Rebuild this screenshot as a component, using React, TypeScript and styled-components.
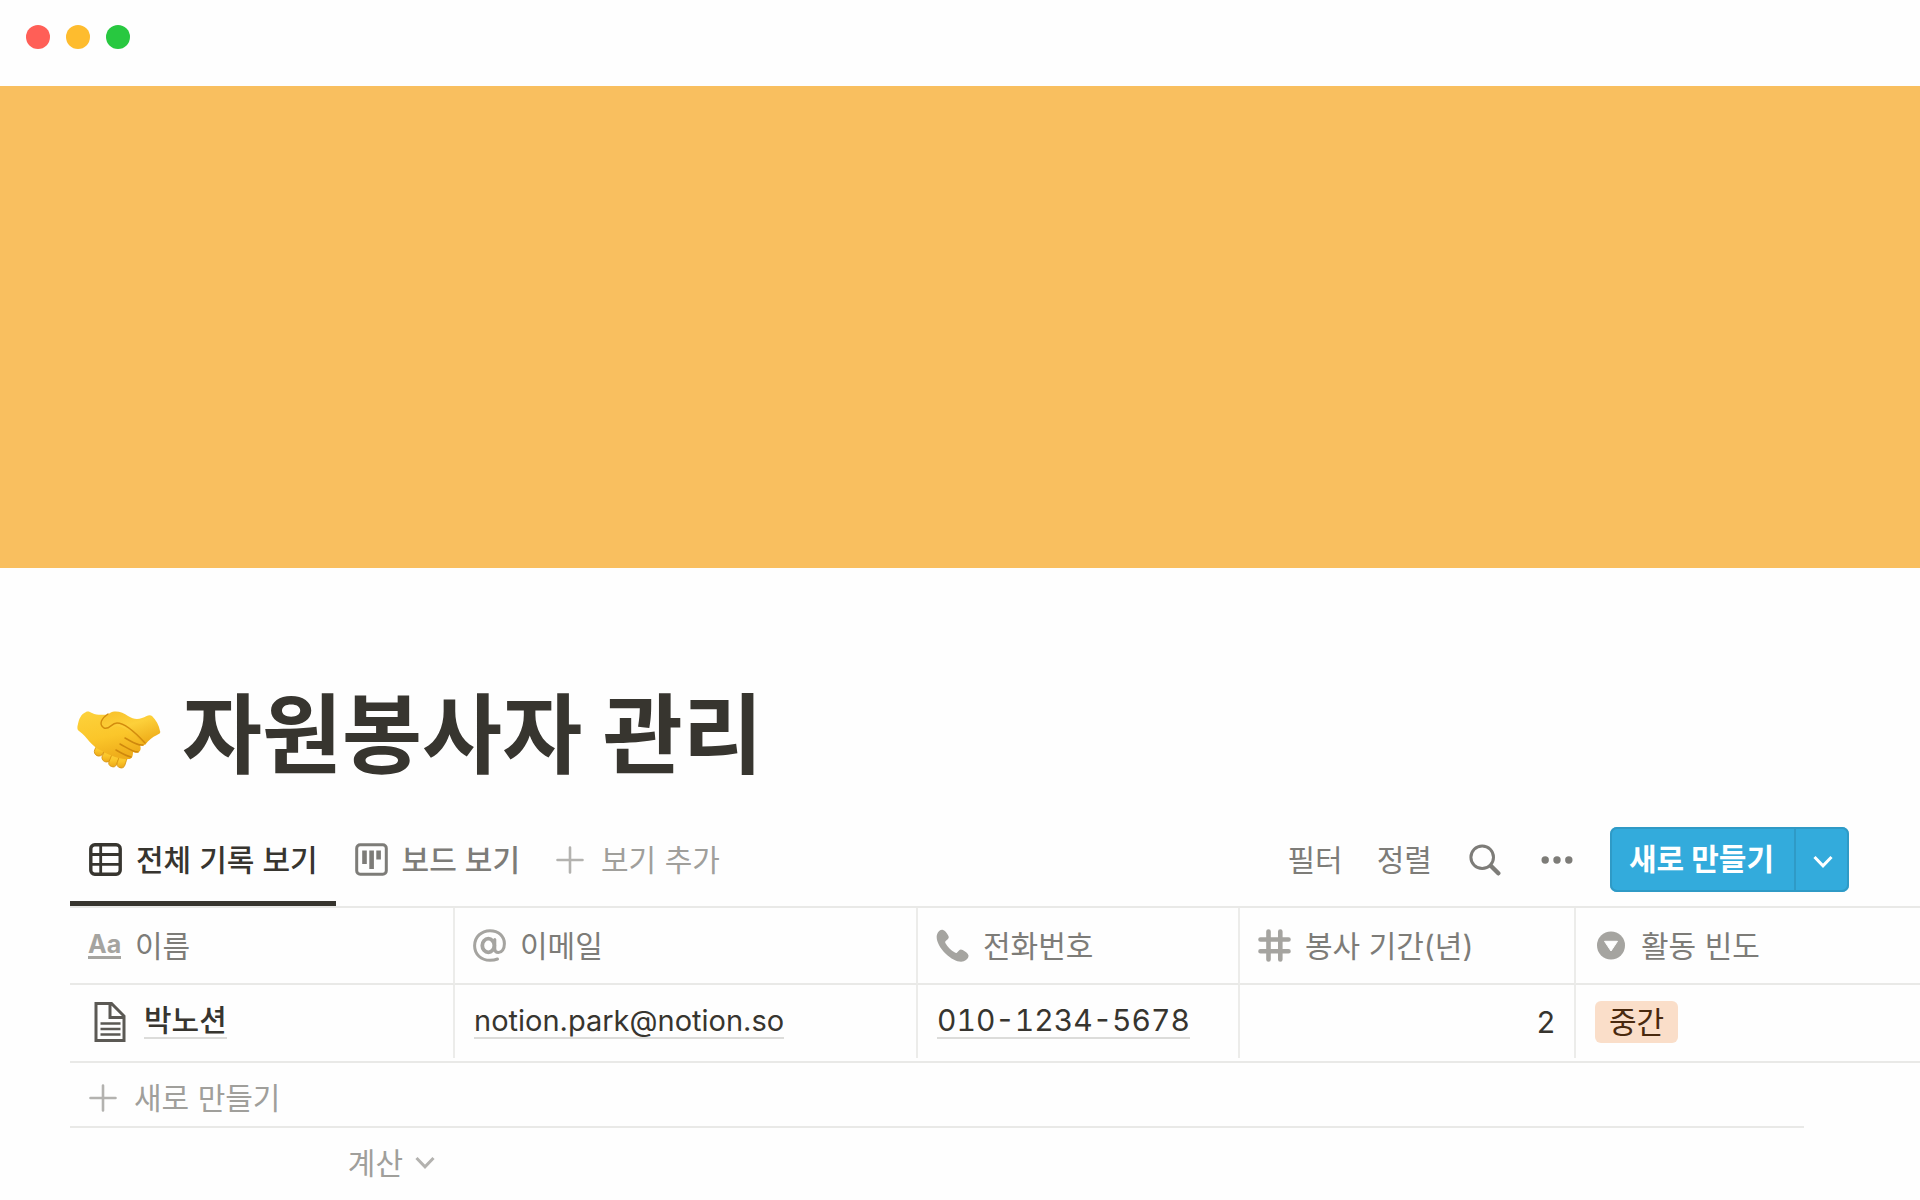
import React from 'react';
import styled, { createGlobalStyle } from 'styled-components';

const GlobalStyle = createGlobalStyle`
  *, *::before, *::after { box-sizing: border-box; }
  body {
    margin: 0;
    background: #fefefe;
    color: #37352f;
    font-family: Inter, "Noto Sans CJK KR", sans-serif;
    font-size: 30px;
    line-height: 40px;
    overflow-x: hidden;
  }
  button { font: inherit; color: inherit; background: none; border: 0; padding: 0; margin: 0; cursor: pointer; white-space: nowrap; }
  a { color: inherit; text-decoration: none; }
  svg { display: block; flex: none; }
`;

const TitleBar = styled.header`
  display: flex;
  gap: 16px;
  height: 86px;
  padding: 25px 26px;
`;

const Dot = styled.span<{ $color: string }>`
  width: 24px;
  height: 24px;
  border-radius: 50%;
  background: ${p => p.$color};
`;

const Cover = styled.div`
  height: 482px;
  background: #f9bf5f;
`;

const Main = styled.main`
  padding: 112px 0 0 70px;
`;

const Heading = styled.h1`
  display: flex;
  align-items: center;
  gap: 21px;
  margin: 0;
  padding-left: 7px;
  font-size: 87px;
  line-height: 112px;
  font-weight: 700;

  svg { margin-top: 8px; }
`;

const Toolbar = styled.div`
  display: flex;
  justify-content: space-between;
  height: 116px;
  padding: 35px 71px 0 0;
  border-bottom: 2px solid #e9e9e7;
`;

const Tabs = styled.div`
  display: flex;
`;

const Tab = styled.button<{ $active?: boolean }>`
  display: flex;
  align-items: center;
  gap: 14px;
  height: 79px;
  padding: 0 18px 9px 19px;
  color: ${p => (p.$active ? '#37352f' : '#7d7c78')};
  font-weight: 500;
  border-bottom: 5px solid ${p => (p.$active ? '#37352f' : 'transparent')};
`;

const AddView = styled(Tab)`
  gap: 16px;
  padding-left: 17px;
  color: #a09f9b;
  font-weight: 400;
`;

const Actions = styled.div`
  display: flex;
  align-items: center;
  gap: 34px;
  height: 65px;
  color: #7d7c78;
`;

const IconButton = styled.button`
  padding: 0 3px;
`;

const NewGroup = styled.div`
  display: flex;
  height: 65px;
  border-radius: 7px;
  overflow: hidden;
  color: #fff;
  background: #33abdc;
  box-shadow: inset 0 0 0 2px #2f9ac6;
`;

const NewButton = styled.button`
  padding: 0 20px 2px 19px;
  font-weight: 700;
`;

const NewMenu = styled.button`
  display: grid;
  place-items: center;
  width: 55px;
  padding-top: 4px;
  border-left: 2px solid #2f9ac6;
`;

const TableFrame = styled.div`
  padding-bottom: 3px;
  border-bottom: 2px solid #e9e9e7;
`;

const Table = styled.table`
  width: 100%;
  table-layout: fixed;
  border-collapse: separate;
  border-spacing: 0;
`;

const Th = styled.th`
  height: 77px;
  padding: 0 18px;
  font-weight: 400;
  text-align: left;
  color: #7d7c78;
  border-bottom: 2px solid #e9e9e7;
  border-right: 2px solid #ececea;
  white-space: nowrap;
  &:last-child { border-right: 0; }
`;

const Td = styled.td<{ $align?: string }>`
  height: 73px;
  padding: 0 19px;
  text-align: ${p => p.$align || 'left'};
  border-right: 2px solid #ececea;
  white-space: nowrap;
  &:last-child { border-right: 0; }
`;

const Label = styled.div`
  display: flex;
  align-items: center;
  gap: 14px;
`;

const PageLabel = styled(Label)`
  gap: 18px;
  padding-left: 5px;
`;

const Value = styled.a<{ $kind?: 'name' | 'email' | 'phone' }>`
  display: block;
  width: fit-content;
  line-height: 33px;
  font-size: ${p => (p.$kind === 'email' ? '29px' : '30px')};
  font-weight: ${p => (p.$kind === 'name' ? 500 : 400)};
  font-variant-numeric: ${p => (p.$kind === 'phone' ? 'tabular-nums' : 'normal')};
  border-bottom: 2px solid #dcdcda;
`;

const Tag = styled.span`
  display: inline-block;
  padding: 0 14px;
  line-height: 42px;
  border-radius: 6px;
  background: #fadec9;
  color: #49290e;
`;

const NewRow = styled.button`
  display: flex;
  align-items: center;
  gap: 16px;
  width: calc(100% - 116px);
  height: 65px;
  padding: 7px 18px 0;
  color: #a09f9b;
  border-bottom: 2px solid #e9e9e7;
`;

const Calc = styled.button`
  display: flex;
  align-items: center;
  justify-content: flex-end;
  gap: 12px;
  width: 384px;
  height: 70px;
  padding-right: 19px;
  color: #a09f9b;
`;

const Plus = () => (
  <svg width="30" height="28" viewBox="0 0 30 28" fill="none" stroke="#b3b2af" strokeWidth="2.6" strokeLinecap="round">
    <path d="M15 1.5v25M2.5 14h25" />
  </svg>
);

const Chevron = ({ color }: { color: string }) => (
  <svg width="20" height="14" viewBox="0 0 20 14" fill="none" stroke={color} strokeWidth="3">
    <path d="M1.5 2 10 10.8 18.500 2" />
  </svg>
);

const GridIcon = () => (
  <svg width="33" height="33" viewBox="0 0 33 33" fill="none" stroke="#37352f">
    <rect x="1.8" y="1.8" width="29.4" height="29.4" rx="4" strokeWidth="3.4" />
    <path d="M2 11.5h29M2 21.3h29M11.7 2v29" strokeWidth="2.8" />
  </svg>
);

const BoardIcon = () => (
  <svg width="33" height="33" viewBox="0 0 33 33" fill="none" stroke="#7d7c78">
    <rect x="1.7" y="1.7" width="29.6" height="29.6" rx="3.5" strokeWidth="3" />
    <path d="M9.5 7.5V21M16.6 7.5V26M23.6 7.5V16.5" strokeWidth="4.6" />
  </svg>
);

const SearchIcon = () => (
  <svg width="32" height="32" viewBox="0 0 32 32" fill="none" stroke="#7d7c78">
    <circle cx="13.2" cy="13.2" r="11.3" strokeWidth="3" />
    <path d="M21.8 21.8 29.3 29.3" strokeWidth="4.4" strokeLinecap="round" />
  </svg>
);

const MoreIcon = () => (
  <svg width="32" height="8" viewBox="0 0 32 8" fill="#7d7c78">
    <circle cx="4.2" cy="4" r="3.7" />
    <circle cx="16" cy="4" r="3.7" />
    <circle cx="27.8" cy="4" r="3.7" />
  </svg>
);

const TextGlyph = styled.span`
  width: 33px;
  height: 26px;
  border-bottom: 3px solid #a5a4a0;
  color: #a5a4a0;
  font: 700 25px/22px Inter, sans-serif;
`;

const AtIcon = () => (
  <svg width="33" height="33" viewBox="0 0 33 33" fill="none" stroke="#a5a4a0" strokeLinecap="round">
    <path d="M24.500 30C22 31 19.500 31.300 17 31.300 8 31.300 1.600 25.300 1.600 16.800 1.600 8 8.300 1.700 17 1.700c8.500 0 14.400 5.600 14.400 13 0 5.300-2.600 8.800-6 8.800-2.400 0-3.600-1.400-3.600-3.500V10.500" strokeWidth="3" />
    <ellipse cx="15.300" cy="16.500" rx="6" ry="6.800" strokeWidth="3.800" />
  </svg>
);

const PhoneIcon = () => (
  <svg width="33" height="33" viewBox="0 0 33 33" fill="#a5a4a0">
    <path d="M1 5.5C2 2.5 4.5.5 6.5.8c2.3.4 4.2 3.2 5.7 5.7 1 1.7.6 2.6-.5 3.7l-2 1.9c-.7.7-.6 1.3-.2 2.1 2.2 4 5.4 7 9.4 9.4.9.5 1.5.5 2.2-.2l1.9-2c1.1-1.1 2.2-1.2 3.7-.4 2.6 1.5 5.5 3.5 5.8 5.6.3 2-1.800 4.500-4.800 5.600-4.600 1.700-11.800-1.600-18-7.500C3.200 18.400-.5 10.600 1 5.500z" />
  </svg>
);

const HashIcon = () => (
  <svg width="33" height="33" viewBox="0 0 33 33" fill="none" stroke="#a5a4a0" strokeWidth="4.6" strokeLinecap="round">
    <path d="M10.5 2.5v28M22.3 2.5v28M2.5 10.5h28M2.5 22.3h28" />
  </svg>
);

const SelectIcon = () => (
  <svg width="33" height="33" viewBox="0 0 33 33">
    <circle cx="17" cy="16.5" r="14" fill="#a5a4a0" />
    <path d="M10.500 12.300h13L17 22z" fill="#fefefe" stroke="#fefefe" strokeLinejoin="round" />
  </svg>
);

const PageIcon = () => (
  <svg width="32" height="40" viewBox="0 0 32 40" fill="none" stroke="#5b5954" strokeWidth="3">
    <path d="M2 1.5h15.5L30 14v24.5H2zM16 1.5V15.5h14" />
    <path d="M6.5 21.5h20M6.5 27h20M6.5 32.5h20" strokeWidth="2.6" />
  </svg>
);

const Handshake = () => (
  <svg width="84" height="58" viewBox="0 0 84 58" role="img" aria-label="악수">
    <defs>
      <linearGradient id="skin" x1="0" y1="0" x2="0.3" y2="1">
        <stop offset="0" stopColor="#fdd23c" />
        <stop offset="0.6" stopColor="#fbc62a" />
        <stop offset="1" stopColor="#efae1b" />
      </linearGradient>
      <linearGradient id="sleeve" x1="0" y1="0" x2="0.6" y2="1">
        <stop offset="0" stopColor="#f8c02a" />
        <stop offset="0.5" stopColor="#fdd03a" />
        <stop offset="1" stopColor="#efae1a" />
      </linearGradient>
    </defs>
    <g fill="url(#skin)" stroke="#d8930e" strokeWidth="0.8">
      <rect x="18" y="34" width="9" height="11" rx="4.5" transform="rotate(24 22 39)" />
      <rect x="26" y="38" width="9" height="13" rx="4.5" transform="rotate(24 30 44)" />
      <rect x="33" y="42" width="8" height="14" rx="4" transform="rotate(22 37 49)" />
      <rect x="41" y="44" width="8" height="13" rx="4" transform="rotate(18 45 50)" />
    </g>
    <path d="M9 1c2-1 4 0 6 1 6 3 12 1 18 2 9 1 22 10 31 19 5 5 6 8 4 10-1 2-3 2-5 1 1 3 1 5-1 7-2 1-4 1-6 0 0 4-1 6-3 7-9 1-19-3-28-8C13 35 11 26 2 20c-2-1-2-4-1-7C2 8 4 3 9 1z" fill="url(#skin)" />
    <path d="M33 2c5-3 13-1 18 3 5 3 9 4 14 2 4-1 7-4 10-2 4 4 7 9 8 15 1 2-1 3-3 4-5 2-8 5-12 10-8-8-15-14-24-18-7-2-8 1-13 2-7-1-8-9 2-16z" fill="url(#sleeve)" />
    <path d="M31 3c-6 4-10 10-4 14 6 2 7-5 13-5 8 0 17 8 28 20" fill="none" stroke="#d38c0d" strokeWidth="1.4" strokeLinecap="round" />
    <path d="M48 27c6 3 12 8 18 7M43 33c6 3 12 8 18 8M39 39c5 3 10 6 15 7" fill="none" stroke="#cf880d" strokeWidth="1.5" strokeLinecap="round" />
  </svg>
);

export default function App() {
  return (
    <>
      <GlobalStyle />
      <TitleBar>
        <Dot $color="#ff5f57" />
        <Dot $color="#febc2e" />
        <Dot $color="#28c840" />
      </TitleBar>
      <Cover />
      <Main>
        <Heading>
          <Handshake />
          자원봉사자 관리
        </Heading>
        <Toolbar>
          <Tabs>
            <Tab $active><GridIcon />전체 기록 보기</Tab>
            <Tab><BoardIcon />보드 보기</Tab>
            <AddView><Plus />보기 추가</AddView>
          </Tabs>
          <Actions>
            <button>필터</button>
            <button>정렬</button>
            <IconButton aria-label="검색"><SearchIcon /></IconButton>
            <IconButton aria-label="더 보기"><MoreIcon /></IconButton>
            <NewGroup>
              <NewButton>새로 만들기</NewButton>
              <NewMenu aria-label="템플릿"><Chevron color="#fff" /></NewMenu>
            </NewGroup>
          </Actions>
        </Toolbar>
        <TableFrame>
          <Table>
            <colgroup>
              <col width="385" />
              <col width="463" />
              <col width="322" />
              <col width="336" />
              <col />
            </colgroup>
            <thead>
              <tr>
                <Th><Label><TextGlyph>Aa</TextGlyph>이름</Label></Th>
                <Th><Label><AtIcon />이메일</Label></Th>
                <Th><Label><PhoneIcon />전화번호</Label></Th>
                <Th><Label><HashIcon />봉사 기간(년)</Label></Th>
                <Th><Label><SelectIcon />활동 빈도</Label></Th>
              </tr>
            </thead>
            <tbody>
              <tr>
                <Td><PageLabel><PageIcon /><Value href="#" $kind="name">박노션</Value></PageLabel></Td>
                <Td><Value href="mailto:notion.park@notion.so" $kind="email">notion.park@notion.so</Value></Td>
                <Td><Value href="tel:010-1234-5678" $kind="phone">010-1234-5678</Value></Td>
                <Td $align="right">2</Td>
                <Td><Tag>중간</Tag></Td>
              </tr>
            </tbody>
          </Table>
        </TableFrame>
        <NewRow><Plus />새로 만들기</NewRow>
        <Calc>계산<Chevron color="#b3b2af" /></Calc>
      </Main>
    </>
  );
}
